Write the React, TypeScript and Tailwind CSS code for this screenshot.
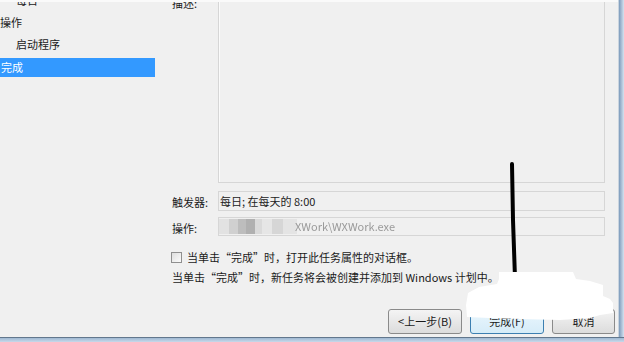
const navItems = [
  { label: '每日', indent: true, selected: false },
  { label: '操作', indent: false, selected: false },
  { label: '启动程序', indent: true, selected: false },
]

const mosaic = [
  { w: 10, c: 'bg-[#e2e2e2]' },
  { w: 9, c: 'bg-[#d0d0d0]' },
  { w: 8, c: 'bg-[#bdbdbd]' },
  { w: 9, c: 'bg-[#b0b0b0]' },
  { w: 7, c: 'bg-[#dadada]' },
  { w: 10, c: 'bg-[#e6e6e6]' },
  { w: 11, c: 'bg-[#d6d6d6]' },
  { w: 14, c: 'bg-[#e4e4e4]' },
]

const WinButton = ({ label, focused }: { label: string; focused?: boolean }) => (
  <div
    className={`h-[25px] rounded-[3px] border flex items-center justify-center text-[11px] text-[#1a1a1a] bg-linear-to-b ${
      focused ? 'border-[#3c7fb1] from-[#eaf6fd] to-[#d6ecf8]' : 'border-[#8a8a8a] from-[#f4f4f4] to-[#dcdcdc]'
    }`}
  >
    {label}
  </div>
)

const App = () => {
  return (
    <div className="w-[624px] h-[342px] overflow-hidden relative bg-[#f0f0f0] text-[#1a1a1a] font-['Noto_Sans_CJK_SC','Noto_Sans',sans-serif] text-[11px] flex flex-col">
      <div className="flex flex-1">
        {/* window body */}
        <div className="w-[618px] h-[337px] flex flex-col border-t-2 border-[#fafafa] overflow-hidden">
          <div className="h-[307px] flex">
            {/* left wizard steps */}
            <div className="w-[155px] flex flex-col mt-[-13px]">
              {navItems.map((item, i) => (
                <div key={i} className={`h-[22px] flex items-center ${item.indent ? 'pl-[16px]' : ''}`}>
                  {item.label}
                </div>
              ))}
              <div className="mt-[3px] h-[19px] bg-[#3399ff] text-white flex items-center pl-[1px]">完成</div>
            </div>

            {/* main content */}
            <div className="w-[433px] ml-[17px] flex flex-col mt-[-8px]">
              <div className="flex h-[189px]">
                <div className="w-[46px] leading-[18px]">描述:</div>
                <div className="flex-1 border border-[#d6d6d6] shadow-[inset_1px_1px_0_#fbfbfb]" />
              </div>

              <div className="flex mt-[8px] h-[20px]">
                <div className="w-[46px] flex items-center pt-[2px]">触发器:</div>
                <div className="flex-1 border border-[#d6d6d6] flex items-center pl-[1px] text-[#222]">
                  每日; 在每天的 8:00
                </div>
              </div>

              <div className="flex mt-[6px] h-[19px]">
                <div className="w-[46px] flex items-center pt-[3px]">操作:</div>
                <div className="flex-1 border border-[#d6d6d6] flex items-center">
                  <div className="flex h-[15px]">
                    {mosaic.map((m, i) => (
                      <div key={i} className={`${m.c} h-full`} style={{ width: m.w }} />
                    ))}
                  </div>
                  <span className="text-[#9a9a9a] blur-[0.7px] ml-[-2px]">XWork\WXWork.exe</span>
                </div>
              </div>

              <div className="flex items-center mt-[13px] h-[16px]">
                <div className="w-[11px] h-[11px] border border-[#8f8f8f] bg-linear-to-br from-[#dedede] to-[#fbfbfb] ml-[-1px]" />
                <span className="ml-[5px]">当单击“完成”时，打开此任务属性的对话框。</span>
              </div>

              <div className="flex items-center mt-[4px] h-[16px]">
                当单击“完成”时，新任务将会被创建并添加到 Windows 计划中。
              </div>
            </div>
          </div>

          {/* wizard buttons */}
          <div className="flex justify-end gap-[8px] pr-[3px]">
            <div className="w-[74px]">
              <WinButton label="<上一步(B)" />
            </div>
            <div className="w-[74px]">
              <WinButton label="完成(F)" focused />
            </div>
            <div className="w-[63px]">
              <WinButton label="取消" />
            </div>
          </div>
        </div>

        {/* right window frame */}
        <div className="w-[6px] border-l border-[#c9d4df] bg-linear-to-r from-[#7d9bbb] to-[#d5e2ef]" />
      </div>

      {/* bottom window frame */}
      <div className="h-[5px] border-t border-[#62778d] bg-linear-to-b from-[#9fb8d2] to-[#c8d9ea]" />

      {/* annotation stroke and redaction blob drawn over the screenshot */}
      <svg className="absolute inset-0 pointer-events-none" width="624" height="342" viewBox="0 0 624 342">
        <path d="M512 164 L513 220 L515 278" stroke="#000" strokeWidth="4" strokeLinecap="round" fill="none" />
        <polygon
          fill="#ffffff"
          points="499,272 573,272 576,279 590,281 603,285 603,296 610,299 613,303 613,313 600,315 590,318 560,320 520,319 490,318 467,317 466,305 468,293 479,287 497,284 499,279"
        />
      </svg>
    </div>
  )
}

export default App
